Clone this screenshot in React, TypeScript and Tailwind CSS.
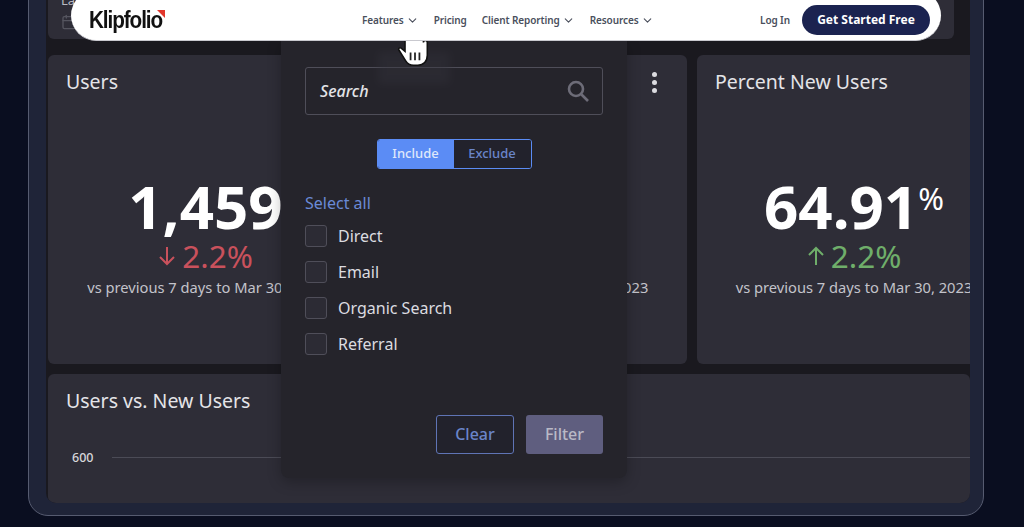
import { Calendar, ChevronDown } from "lucide-react"

function NavLink({ label, menu }: { label: string; menu?: boolean }) {
  return (
    <span className="flex items-center gap-[2px] text-[10px] tracking-[-0.1px] font-semibold text-[#4a4f5c]">
      {label}
      {menu && <ChevronDown className="w-[13px] h-[13px]" strokeWidth={2} />}
    </span>
  )
}

function HandCursor() {
  return (
    <svg viewBox="0 0 32 28" className="w-[36px] h-[31px]">
      <path
        d="M7 3v10L3.500 10C2 9 .6 10.600 1.600 12l6 9.500c1.500 2.600 4 4 7 4h4c5 0 8.500-3.500 8.500-9V5c0-2.500-3.500-2.500-3.500 0V3c0-2.500-3.500-2.500-3.500 0V1c0-2.500-3.500-2.500-3.500 0V0c0-2-3.500-2-3.500 0v1c0-2-5-1.500-5 2z"
        fill="#fff"
        stroke="#111"
        strokeWidth="1.400"
      />
      <path d="M12 14v7M16 14v7M20 14v7" stroke="#222" strokeWidth="1.600" />
    </svg>
  )
}

function Arrow({ up }: { up?: boolean }) {
  return (
    <svg viewBox="0 0 18 20" className={`w-[18px] h-[20px] ${up ? "rotate-180" : ""}`} fill="none" stroke="currentColor" strokeWidth="2">
      <path d="M9 1v17M2 11l7 7 7-7" />
    </svg>
  )
}

function Metric({
  title,
  value,
  unit,
  delta,
  up,
  menu,
  hideValue,
}: {
  title: string
  value?: string
  unit?: string
  delta?: string
  up?: boolean
  menu?: boolean
  hideValue?: boolean
}) {
  return (
    <div className="relative h-[309px] rounded-[6px] bg-[#2e2d37] px-[18px] pt-[13px]">
      <div className="flex h-[28px] items-start justify-between">
        <h3 className="text-[19.500px] leading-[28px] text-[#e4e4e8]">{title}</h3>
        {menu && (
          <div className="ml-auto flex flex-col gap-[3px] pt-[4px] pr-[12px]">
            <span className="w-[5px] h-[5px] rounded-full bg-[#dcdce0]" />
            <span className="w-[5px] h-[5px] rounded-full bg-[#dcdce0]" />
            <span className="w-[5px] h-[5px] rounded-full bg-[#dcdce0]" />
          </div>
        )}
      </div>
      {!hideValue && (
        <div className="flex flex-col items-center mt-[80px]">
          <div className="flex items-start text-[60px] leading-[60px] font-bold text-white">
            {value}
            {unit && <span className="text-[31px] leading-[44px] font-normal">{unit}</span>}
          </div>
          <div className={`mt-[5px] flex items-center gap-[6px] text-[31.500px] leading-[30px] ${up ? "text-[#6fae6a]" : "text-[#c9515c]"}`}>
            <Arrow up={up} />
            {delta}
          </div>
        </div>
      )}
      <p className={`text-center text-[14.700px] leading-[20px] text-[#c3c3ca] whitespace-nowrap ${hideValue ? "mt-[181px]" : "mt-[6px]"}`}>
        vs previous 7 days to Mar 30, 2023
      </p>
    </div>
  )
}

export default function App() {
  const options = ["Direct", "Email", "Organic Search", "Referral"]

  return (
    <div className="relative h-[527px] w-[1024px] overflow-hidden bg-[#0a0e20] font-['Noto_Sans',sans-serif]">
      {/* device frame */}
      <div className="mx-[28px] mt-[-20px] h-[536px] w-[956px] rounded-[20px] border border-[#565b70] bg-[#1f2438] pl-[17px] pr-[13px] pb-[12px]">
        <div className="h-full overflow-hidden rounded-b-[10px] bg-[#1a191f] pl-[2px]">
          <div className="h-[58px] w-[906px] rounded-[6px] bg-[#2e2d37] pl-[13px] pt-[11px] text-[13px] leading-[16px] text-[#b9b9c2]">
            Last 7 days
            <Calendar className="mt-[6px] w-[16px] h-[16px] text-[#55555f]" />
          </div>
          <div className="mt-[16px] grid grid-cols-[315px_314px_314px] gap-x-[10px]">
            <Metric title="Users" value="1,459" delta="2.2%" />
            <Metric title="" menu hideValue />
            <Metric title="Percent New Users" value="64.91" unit="%" delta="2.2%" up />
          </div>
          <div className="mt-[10px] h-[129px] rounded-[6px] bg-[#2e2d37] pl-[18px] pt-[13px]">
            <h3 className="text-[19.500px] leading-[28px] text-[#e4e4e8]">Users vs. New Users</h3>
            <div className="mt-[34px] ml-[6px] flex items-center gap-[19px]">
              <span className="text-[12.500px] leading-[17px] font-medium text-[#d8d8dc]">600</span>
              <div className="h-px flex-1 bg-[#4b4b56]" />
            </div>
          </div>
        </div>
      </div>

      {/* filter popover */}
      <div className="absolute left-[281px] top-[41px] flex h-[437px] w-[346px] flex-col rounded-b-[8px] bg-[#25242b] px-[24px] pt-[26px] pb-[24px] shadow-[0_4px_14px_rgba(0,0,0,0.25)]">
        <div className="flex h-[48px] items-center justify-between rounded-[3px] border-[1.500px] border-[#4f4e59] pl-[14px] pr-[12px]">
          <span className="text-[16px] font-medium italic text-[#e4e4e8]">Search</span>
          <svg viewBox="0 0 24 24" className="w-[24px] h-[24px]" fill="none" stroke="#6d6c78" strokeWidth="2.600">
            <circle cx="10" cy="10" r="7" />
            <path d="M15.500 15.500L22 22" />
          </svg>
        </div>
        <div className="mt-[24px] flex justify-center">
          <div className="flex h-[30px] w-[155px] overflow-hidden rounded-[3px] border-[1.500px] border-[#5b8cf5] text-[13px] font-medium">
            <span className="flex w-[76px] items-center justify-center bg-[#5b8cf5] text-[#dfe8fb]">Include</span>
            <span className="flex flex-1 items-center justify-center bg-[#22222c] text-[#6a85c9]">Exclude</span>
          </div>
        </div>
        <button className="mt-[23px] self-start text-[16px] leading-[22px] text-[#6a8ad6]">Select all</button>
        <ul className="mt-[11px] flex flex-col gap-[14px]">
          {options.map((option) => (
            <li key={option} className="flex h-[22px] items-center gap-[11px] text-[16px] text-[#dcdce0]">
              <span className="h-[22px] w-[22px] rounded-[3px] border-[1.500px] border-[#4f4e59] bg-[#2c2b34]" />
              {option}
            </li>
          ))}
        </ul>
        <div className="mt-auto flex justify-end gap-[12px]">
          <button className="h-[39px] w-[78px] rounded-[3px] border-[1.500px] border-[#5f74b5] bg-[#22222c] pb-[2px] text-[16px] font-medium text-[#6a85c9]">Clear</button>
          <button className="h-[39px] w-[77px] rounded-[3px] bg-[#5f5e7f] pb-[2px] text-[16px] font-medium text-[#b9b9c6]">Filter</button>
        </div>
      </div>

      {/* ghost of the old cursor position, video smear */}
      <div className="absolute left-[378px] top-[52px] h-[32px] w-[72px] bg-[#34333c] opacity-40 blur-[4px]" />

      <div className="absolute left-[397px] top-[37px]">
        <HandCursor />
      </div>

      {/* site nav over the page */}
      <div className="absolute left-[71px] top-[-10px] flex h-[51px] w-[870px] items-center rounded-[26px] bg-white pt-[10px] pl-[18px] pr-[11px] border-b border-[#c9c9cf]">
        <div className="flex items-start w-[273px]">
          <span className="origin-left scale-x-[.9] font-['Liberation_Sans',sans-serif] text-[23px] font-bold leading-none tracking-[-1.2px] text-[#111]">Klipfolio</span>
          <span className="ml-[-13px] mt-[1px] h-0 w-0 border-t-[8px] border-l-[8px] border-t-[#e2372c] border-l-transparent" />
        </div>
        <div className="flex items-center gap-[15px]">
          <NavLink label="Features" menu />
          <NavLink label="Pricing" />
          <NavLink label="Client Reporting" menu />
          <NavLink label="Resources" menu />
        </div>
        <div className="ml-auto flex items-center gap-[12px]">
          <NavLink label="Log In" />
          <button className="h-[30px] w-[128px] rounded-full bg-[#1b2350] text-[12px] font-bold text-white">Get Started Free</button>
        </div>
      </div>
    </div>
  )
}
